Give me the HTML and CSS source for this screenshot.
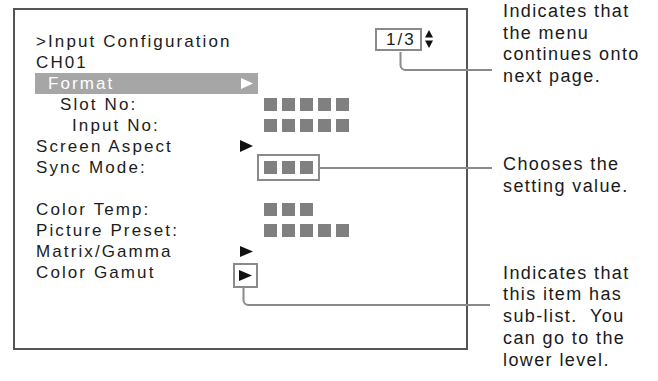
FILE: index.html
```html
<!DOCTYPE html>
<html>
<head>
<meta charset="utf-8">
<link rel="stylesheet" href="styles.css">
</head>
<body>
<div class="page">
  <div class="screen">
    <div class="menu">
      <div class="row">
        <span class="label">&gt;Input Configuration</span>
        <div class="pager">
          <span class="pagebox">1/3</span>
          <svg class="updown" width="8" height="20" viewBox="0 0 8 20"><polygon points="4,0 8,7.5 0,7.5" fill="#111"/><polygon points="0,10.5 8,10.5 4,18" fill="#111"/></svg>
        </div>
      </div>
      <div class="row"><span class="label">CH01</span></div>
      <div class="row sel">
        <span>Format</span>
        <svg class="arrow" width="12" height="11" viewBox="0 0 12 11"><polygon points="0,0 12,5.5 0,11" fill="#fff"/></svg>
      </div>
      <div class="row"><span class="label sub1">Slot No:</span><span class="val sq"><i></i><i></i><i></i><i></i><i></i></span></div>
      <div class="row"><span class="label sub2">Input No:</span><span class="val sq"><i></i><i></i><i></i><i></i><i></i></span></div>
      <div class="row"><span class="label">Screen Aspect</span><svg class="arrow" width="13" height="12" viewBox="0 0 13 12"><polygon points="0,0 13,6 0,12" fill="#111"/></svg></div>
      <div class="row"><span class="label">Sync Mode:</span><span class="val sq boxed"><i></i><i></i><i></i></span></div>
      <div class="row"></div>
      <div class="row"><span class="label">Color Temp:</span><span class="val sq"><i></i><i></i><i></i></span></div>
      <div class="row"><span class="label">Picture Preset:</span><span class="val sq"><i></i><i></i><i></i><i></i><i></i></span></div>
      <div class="row"><span class="label">Matrix/Gamma</span><svg class="arrow" width="13" height="11" viewBox="0 0 13 11"><polygon points="0,0 13,5.5 0,11" fill="#111"/></svg></div>
      <div class="row"><span class="label">Color Gamut</span><span class="arrowbox"><svg width="13" height="11" viewBox="0 0 13 11"><polygon points="0,0 13,5.5 0,11" fill="#111"/></svg></span></div>
    </div>
  </div>
  <div class="notes">
    <p class="note n1">Indicates that<br>the menu<br>continues onto<br>next page.</p>
    <p class="note n2">Chooses the<br>setting value.</p>
    <p class="note n3">Indicates that<br>this item has<br>sub-list.&nbsp; You<br>can go to the<br>lower level.</p>
  </div>
  <svg class="leaders" width="658" height="381" viewBox="0 0 658 381">
    <path d="M400.5 52 V65 A5 5 0 0 0 405.5 70 H492" />
    <path d="M320 168 H492" />
    <path d="M243.5 288 V300 A5 5 0 0 0 248.5 305 H490" />
  </svg>
</div>
</body>
</html>
```
FILE: styles.css
```css
html, body {
  margin: 0;
  padding: 0;
  background: #fff;
}

.page {
  position: relative;
  width: 658px;
  height: 381px;
  display: flex;
  align-items: flex-start;
  font-family: "Liberation Sans", Arial, sans-serif;
  color: #1e1e1e;
}

.screen {
  box-sizing: border-box;
  margin-left: 13px;
  margin-top: 8px;
  width: 455px;
  height: 342px;
  border: 2px solid #555;
  flex: none;
}

.menu {
  padding: 20.8px 33px 0 21px;
  font-size: 17px;
  letter-spacing: 2.1px;
  color: #1c1c1c;
}

.row {
  display: flex;
  align-items: center;
  height: 21px;
  line-height: 21px;
  white-space: nowrap;
}

.label {
  width: 204px;
  flex: none;
}

.sub1 { padding-left: 24px; box-sizing: border-box; }
.sub2 { padding-left: 36px; box-sizing: border-box; }

.sel {
  width: 223px;
  box-sizing: border-box;
  margin-left: -1px;
  padding-left: 13px;
  padding-right: 5px;
  background: #a6a6a6;
  color: #fff;
  justify-content: space-between;
}

.arrow { display: block; flex: none; }

.sq {
  display: flex;
  gap: 5px;
  margin-left: 24px;
}

.sq i {
  display: block;
  width: 13px;
  height: 13px;
  background: #808080;
}

.boxed {
  outline: 2px solid #8a8a8a;
  outline-offset: 5px;
}

.arrowbox {
  box-sizing: border-box;
  width: 25px;
  height: 25px;
  margin-left: -7px;
  margin-top: 6px;
  border: 2px solid #8a8a8a;
  display: flex;
  align-items: center;
  justify-content: center;
}

.arrowbox svg { display: block; }

.pager {
  margin-left: auto;
  margin-bottom: 3px;
  display: flex;
  align-items: center;
  gap: 3px;
}

.pagebox {
  box-sizing: border-box;
  width: 47px;
  height: 23px;
  line-height: 19px;
  border: 2px solid #8a8a8a;
  padding-left: 9px;
  letter-spacing: 2px;
}

.updown { display: block; }

.notes {
  margin-left: 35px;
  padding-top: 1px;
  display: flex;
  flex-direction: column;
}

.note {
  margin: 0;
  font-size: 18px;
  line-height: 21.7px;
  letter-spacing: 1.4px;
  white-space: nowrap;
  color: #1a1a1a;
}

.n2 { margin-top: 66.5px; }
.n3 { margin-top: 65px; }

.leaders {
  position: absolute;
  left: 0;
  top: 0;
  pointer-events: none;
  fill: none;
  stroke: #8a8a8a;
  stroke-width: 2;
}
```
